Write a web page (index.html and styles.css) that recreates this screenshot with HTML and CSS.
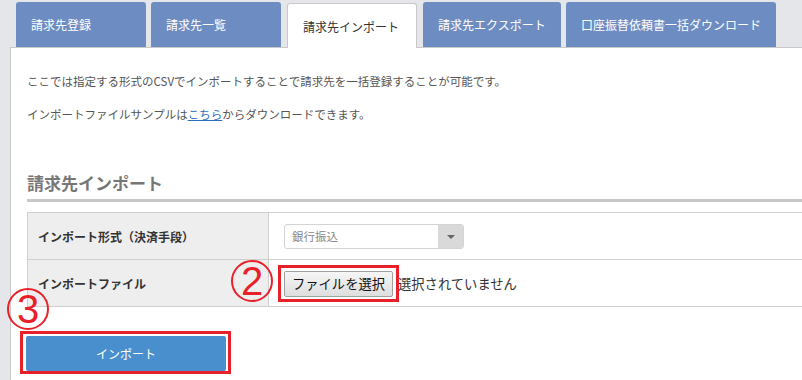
FILE: index.html
```html
<!DOCTYPE html>
<html lang="ja">
<head>
    <meta charset="UTF-8">
    <meta name="viewport" content="width=device-width, initial-scale=1.0">
    <title>請求先インポート</title>
    <link rel="stylesheet" href="styles.css">
</head>
<body>
    <div class="tabs">
        <a class="tab" href="#">請求先登録</a>
        <a class="tab" href="#">請求先一覧</a>
        <a class="tab active" href="#">請求先インポート</a>
        <a class="tab wide" href="#">請求先エクスポート</a>
        <a class="tab widest" href="#">口座振替依頼書一括ダウンロード</a>
    </div>

    <div class="panel">
        <p>ここでは指定する形式のCSVでインポートすることで請求先を一括登録することが可能です。</p>
        <p>インポートファイルサンプルは<a href="#">こちら</a>からダウンロードできます。</p>

        <h2>請求先インポート</h2>

        <table class="form-table">
            <tr>
                <th>インポート形式（決済手段）</th>
                <td>
                    <div class="select">
                        <span class="select-value">銀行振込</span>
                        <span class="select-arrow"></span>
                    </div>
                </td>
            </tr>
            <tr>
                <th>インポートファイル</th>
                <td>
                    <div class="file">
                        <span class="mark"><button class="file-button">ファイルを選択</button></span>
                        <span class="file-name">選択されていません</span>
                    </div>
                </td>
            </tr>
        </table>

        <span class="mark mark-submit"><button class="submit">インポート</button></span>

        <!-- annotations -->
        <span class="num num-2">2</span>
        <span class="num num-3">3</span>
    </div>
</body>
</html>
```

FILE: styles.css
```css
* {
    margin: 0;
    padding: 0;
    box-sizing: border-box;
}

html {
    overflow: hidden;
}

body {
    background: #e4e6e9;
    padding-left: 10px;
    font-family: "Noto Sans CJK JP", "Noto Sans", sans-serif;
    color: #555;
    width: 960px;
    height: 380px;
}

.tabs {
    display: flex;
    align-items: flex-start;
    padding: 2px 0 0 6px;
    border-bottom: 1px solid #c9c9c9;
}

.tab {
    display: flex;
    align-items: center;
    width: 130px;
    height: 45px;
    margin-right: 5px;
    padding: 0 0 0 15px;
    background: #6d8dc2;
    color: #fff;
    font-size: 12px;
    text-decoration: none;
    border-radius: 3px 3px 0 0;
}

.tab.active {
    margin: 1px 6px -1px 1px;
    background: #fff;
    color: #333;
    border: 1px solid #c9c9c9;
    border-bottom: none;
    padding-top: 1px;
}

.tab.wide {
    width: 138px;
}

.tab.widest {
    width: 210px;
}

.panel {
    position: relative;
    background: #fff;
    border: 1px solid #c9c9c9;
    border-top: none;
    border-radius: 0 0 0 3px;
    padding: 23px 16px 8px;
}

.panel p {
    font-size: 11.5px;
    line-height: 20px;
    margin-bottom: 13px;
}

.panel p a {
    color: #2a6ebd;
}

h2 {
    margin-top: 47px;
    font-size: 17px;
    line-height: 24px;
    color: #777;
    font-weight: bold;
    padding-bottom: 4px;
    border-bottom: 3px solid #c8c8c8;
    margin-bottom: 10px;
}

.form-table {
    width: 100%;
    border-collapse: collapse;
    border: 1px solid #cfcfcf;
}

.form-table th,
.form-table td {
    height: 47px;
    border: 1px solid #cfcfcf;
    padding: 0 0 0 10px;
    text-align: left;
    vertical-align: middle;
}

.form-table th {
    width: 241px;
    background: #eee;
    color: #333;
    font-size: 12px;
    font-weight: bold;
}

.form-table td {
    padding-left: 15px;
}

.select {
    display: flex;
    width: 180px;
    height: 25px;
    border: 1px solid #d4d4d4;
    border-radius: 3px;
    overflow: hidden;
}

.select-value {
    flex: 1;
    padding-left: 7px;
    font-size: 11.5px;
    line-height: 23px;
    color: #888;
}

.select-arrow {
    width: 25px;
    background: #d9d9d9;
    position: relative;
}

.select-arrow::after {
    content: "";
    position: absolute;
    left: 9px;
    top: 10px;
    border-left: 4px solid transparent;
    border-right: 4px solid transparent;
    border-top: 4px solid #666;
}

.file {
    display: flex;
    align-items: center;
    margin-left: -6px;
}

.file-button {
    display: block;
    width: 109px;
    height: 26px;
    font-family: inherit;
    font-size: 13.3px;
    color: #111;
    background: linear-gradient(#f6f6f6, #dedede);
    border: 1px solid #a0a0a0;
    border-radius: 2px;
}

.file-name {
    margin-left: -1px;
    font-size: 13.3px;
    color: #333;
}

.mark {
    display: inline-block;
    border: 3px solid #e8202a;
    padding: 3px 3px 2px;
}

.mark-submit {
    margin: 24px 0 0 -7px;
    padding: 2px 2px 0 3px;
}

.submit {
    display: block;
    width: 200px;
    height: 35px;
    background: #4a8fcd;
    color: #fff;
    border: none;
    border-radius: 2px;
    font-family: inherit;
    font-size: 12px;
}

.num {
    position: absolute;
    width: 42px;
    height: 42px;
    border: 2px solid #e8202a;
    border-radius: 50%;
    color: #e8202a;
    font-family: "Liberation Sans", sans-serif;
    font-size: 40px;
    line-height: 38px;
    text-align: center;
}

.num-2 {
    left: 220px;
    top: 212px;
}

.num-3 {
    left: -4px;
    top: 240px;
}
```
